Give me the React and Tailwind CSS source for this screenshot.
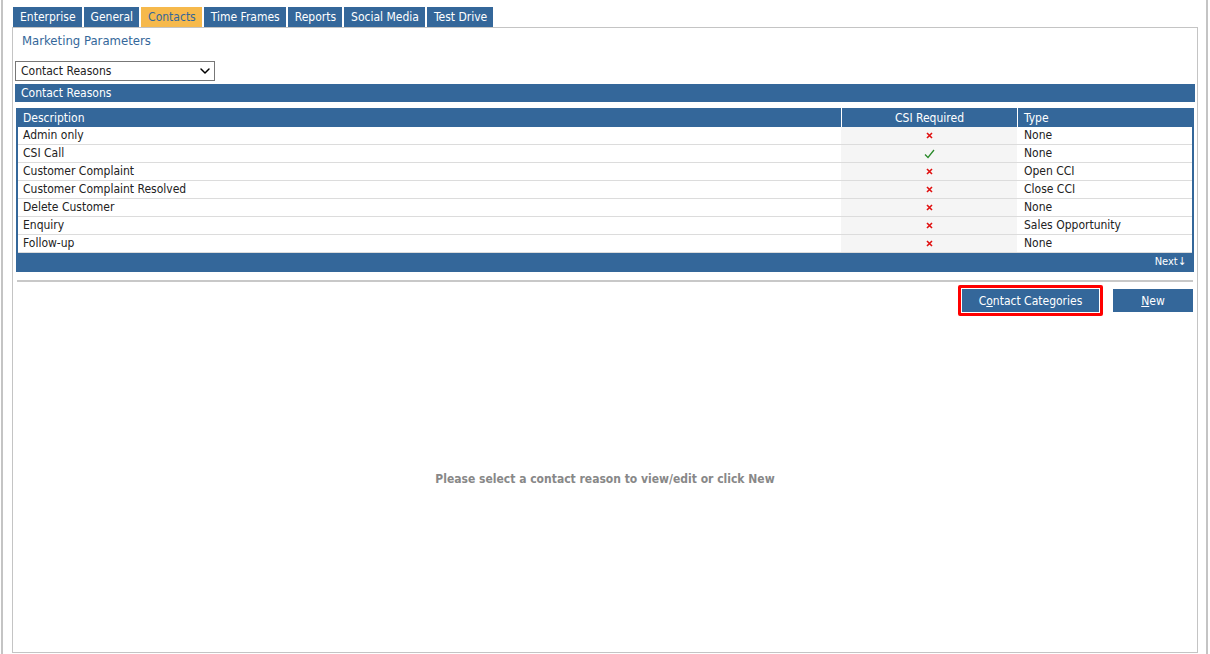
import { ChevronDown } from "lucide-react"

const tabs = ["Enterprise", "General", "Contacts", "Time Frames", "Reports", "Social Media", "Test Drive"]

const rows = [
  { name: "Admin only", csi: false, type: "None" },
  { name: "CSI Call", csi: true, type: "None" },
  { name: "Customer Complaint", csi: false, type: "Open CCI" },
  { name: "Customer Complaint Resolved", csi: false, type: "Close CCI" },
  { name: "Delete Customer", csi: false, type: "None" },
  { name: "Enquiry", csi: false, type: "Sales Opportunity" },
  { name: "Follow-up", csi: false, type: "None" },
]

const Cross = () => (
  <svg width="7" height="7" viewBox="0 0 7 7" className="inline-block">
    <path d="M1 1 L6 6 M6 1 L1 6" stroke="#e01010" strokeWidth="1.6" />
  </svg>
)

const Check = () => (
  <svg width="11" height="10" viewBox="0 0 11 10" className="inline-block">
    <path d="M1 5.5 L4 8.5 L10 1" stroke="#2a8a2a" strokeWidth="1.3" fill="none" />
  </svg>
)

export default function App() {
  return (
    <div
      className="h-[654px] w-[1210px] bg-white text-[12px] text-[#222] overflow-hidden"
      style={{ fontFamily: "'DejaVu Sans Condensed', Tahoma, 'DejaVu Sans', sans-serif" }}
    >
      <div className="h-full ml-[1px] mr-[2px] border-x-2 border-[#c4c4c4] pl-[9px] pr-[8px] pt-[7px] pb-[1px] flex flex-col">
        <div className="flex gap-[2px] pl-[1px]">
          {tabs.map((t) => (
            <div
              key={t}
              className={`h-[20px] pl-[7px] pr-[6px] flex items-center leading-none ${
                t === "Contacts" ? "bg-[#f6b94c] text-[#34679a]" : "bg-[#34679a] text-white"
              }`}
            >
              {t}
            </div>
          ))}
        </div>
        <div className="flex-1 border border-[#c4c4c4] flex flex-col px-[2px]">
          <div className="pl-[7px] pt-[3px] h-[33px] text-[13px] text-[#34679a]">Marketing Parameters</div>
          <div className="w-[200px] h-[20px] border border-[#777] flex items-center justify-between pl-[5px] pr-[1px]">
            <span>Contact Reasons</span>
            <ChevronDown size={16} strokeWidth={2.2} className="text-black" />
          </div>
          <div className="mt-[3px] h-[18px] bg-[#34679a] text-white pl-[6px] flex items-center">Contact Reasons</div>
          <div className="mt-[6px] mx-[1px] border-x-2 border-[#34679a]">
            <div className="flex h-[19px] bg-[#34679a] text-white items-center">
              <div className="flex-1 pl-[5px]">Description</div>
              <div className="w-[176px] text-center border-l border-white h-full flex items-center justify-center">CSI Required</div>
              <div className="w-[175px] pl-[6px] border-l border-white h-full flex items-center">Type</div>
            </div>
            {rows.map((r) => (
              <div key={r.name} className="flex h-[18px] border-b border-[#dcdcdc] items-center leading-none">
                <div className="flex-1 pl-[5px] -mt-[2px]">{r.name}</div>
                <div className="w-[176px] h-full bg-[#f5f5f5] flex items-center justify-center">
                  {r.csi ? <Check /> : <Cross />}
                </div>
                <div className="w-[175px] pl-[7px] -mt-[2px]">{r.type}</div>
              </div>
            ))}
            <div className="h-[19px] bg-[#34679a] text-white text-[11px] flex items-center justify-end -mx-[2px]">
              <span className="pr-[8px]">Next↓</span>
            </div>
          </div>
          <div className="mt-[8px] mx-[2px] border-t-2 border-[#c8c8c8]" />
          <div className="flex justify-end items-center gap-[10px] pr-[2px] mt-[3px]">
            <div className="border-[3px] border-[#ff0000] rounded-[2px] p-[1px] bg-white">
              <div className="h-[23px] w-[137px] bg-[#34679a] text-white flex items-center justify-center">
                <span>
                  C<span className="underline">o</span>ntact Categories
                </span>
              </div>
            </div>
            <div className="h-[23px] w-[80px] bg-[#34679a] text-white flex items-center justify-center">
              <span>
                <span className="underline">N</span>ew
              </span>
            </div>
          </div>
          <div className="flex-1 flex items-center justify-center pb-[10px] font-bold text-[#888] text-[12px]">
            Please select a contact reason to view/edit or click New
          </div>
        </div>
      </div>
    </div>
  )
}
